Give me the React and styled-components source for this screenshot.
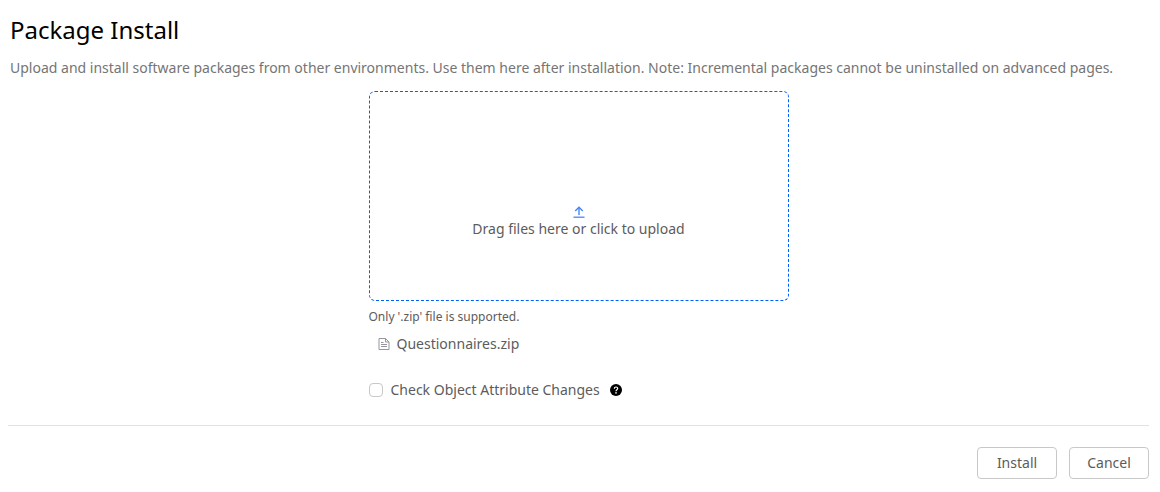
import React, { useState } from 'react'
import styled, { createGlobalStyle } from 'styled-components'

const Palette = {
  Primary: '#0060ff',
  Title: '#000000',
  Text: '#5c5c5c',
  Muted: '#757575',
  Border: '#c8c8c8',
  Divider: '#e1e1e1',
}

function UploadIcon() {
  return (
    <svg width="12" height="12" viewBox="0 0 12 12" fill="none" stroke="#4387f8" aria-hidden="true">
      <path d="M6 9V1.5" strokeWidth="1.4" />
      <path d="M2.2 5L6 1.2L9.8 5" strokeWidth="1.4" />
      <path d="M0.5 11.2H11.5" strokeWidth="1.3" />
    </svg>
  )
}

function FileIcon() {
  return (
    <svg width="12" height="12" viewBox="0 0 12 12" fill="none" stroke="#96969c" aria-hidden="true">
      <path d="M1 0.5H7.5L11 4V11.5H1Z" />
      <path d="M7.5 0.5V4H11" />
      <path d="M3 4.5H5.5M3 6.5H9M3 8.5H9" />
    </svg>
  )
}

function HelpIcon() {
  return (
    <svg width="12" height="12" viewBox="0 0 12 12" aria-hidden="true">
      <circle cx="6" cy="6" r="6" fill="#000" />
      <path d="M4.3 4.7C4.3 2.4 7.7 2.5 7.7 4.5C7.7 5.7 6 5.7 6 7.2" fill="none" stroke="#fff" strokeWidth="1.2" />
      <circle cx="6" cy="8.9" r="0.8" fill="#fff" />
    </svg>
  )
}

function App() {
  const [fileName, setFileName] = useState('Questionnaires.zip')
  const [checkAttributes, setCheckAttributes] = useState(false)

  const handleFile = (event) => {
    const file = event.target.files[0]
    if (file) setFileName(file.name)
  }

  return (
    <Page>
      <GlobalStyle />
      <Title>Package Install</Title>
      <Description>
        Upload and install software packages from other environments. Use them here after installation. Note:
        Incremental packages cannot be uninstalled on advanced pages.
      </Description>
      <Form>
        <DropZone>
          <HiddenFile type="file" accept=".zip" onChange={handleFile} />
          <UploadIcon />
          Drag files here or click to upload
        </DropZone>
        <Hint>Only '.zip' file is supported.</Hint>
        <FileRow>
          <FileIcon />
          {fileName}
        </FileRow>
        <Option>
          <CheckboxLabel>
            <Checkbox
              type="checkbox"
              checked={checkAttributes}
              onChange={(event) => setCheckAttributes(event.target.checked)}
            />
            Check Object Attribute Changes
          </CheckboxLabel>
          <HelpButton type="button" aria-label="Help">
            <HelpIcon />
          </HelpButton>
        </Option>
      </Form>
      <Actions>
        <Button type="button">Install</Button>
        <Button type="button">Cancel</Button>
      </Actions>
    </Page>
  )
}

const GlobalStyle = createGlobalStyle`
  * {
    box-sizing: border-box;
  }

  body {
    margin: 0;
    background-color: #fff;
    color: ${Palette.Text};
    font-family: "Noto Sans", "Open Sans", sans-serif;
    font-size: 14px;
    line-height: 20px;
  }
`;

const Page = styled.main`
  padding: 14px 11px 13px 8px;
`;

const Title = styled.h1`
  margin: 0;
  padding: 0 2px;
  color: ${Palette.Title};
  font-size: 24px;
  font-weight: 400;
  line-height: 32px;
`;

const Description = styled.p`
  margin: 12px 0 13px;
  padding: 0 2px;
  color: ${Palette.Muted};
`;

const Form = styled.div`
  width: 100%;
  max-width: 420px;
  margin: 0 auto;
`;

const DropZone = styled.label`
  display: flex;
  flex-direction: column;
  align-items: center;
  justify-content: center;
  height: 210px;
  padding-top: 52px;
  gap: 1px;
  border: 1px dashed ${Palette.Primary};
  border-radius: 6px;
  cursor: pointer;
`;

const HiddenFile = styled.input`
  position: absolute;
  width: 1px;
  height: 1px;
  opacity: 0;
`;

const Hint = styled.p`
  margin: 8px 0;
  font-size: 12px;
  line-height: 16px;
`;

const FileRow = styled.div`
  display: flex;
  align-items: center;
  gap: 7px;
  padding: 1px 0 0 9px;
`;

const Option = styled.div`
  display: flex;
  align-items: center;
  gap: 10px;
  margin: 26px 0 25px;
`;

const CheckboxLabel = styled.label`
  display: flex;
  align-items: center;
  gap: 8px;
`;

const Checkbox = styled.input`
  appearance: none;
  width: 14px;
  height: 14px;
  margin: 0;
  border: 1px solid ${Palette.Border};
  border-radius: 4px;
  background-color: #fff;

  &:checked {
    border-color: ${Palette.Primary};
    background-color: ${Palette.Primary};
  }
`;

const HelpButton = styled.button`
  display: flex;
  padding: 0;
  border: none;
  background: none;
  cursor: pointer;
`;

const Actions = styled.div`
  display: flex;
  justify-content: flex-end;
  gap: 12px;
  padding-top: 21px;
  border-top: 1px solid ${Palette.Divider};
`;

const Button = styled.button`
  min-width: 80px;
  height: 32px;
  padding: 0 16px;
  border: 1px solid ${Palette.Border};
  border-radius: 4px;
  background-color: #fff;
  color: ${Palette.Text};
  font: inherit;
  cursor: pointer;

  &:hover {
    border-color: ${Palette.Primary};
    color: ${Palette.Primary};
  }
`;

export default App
